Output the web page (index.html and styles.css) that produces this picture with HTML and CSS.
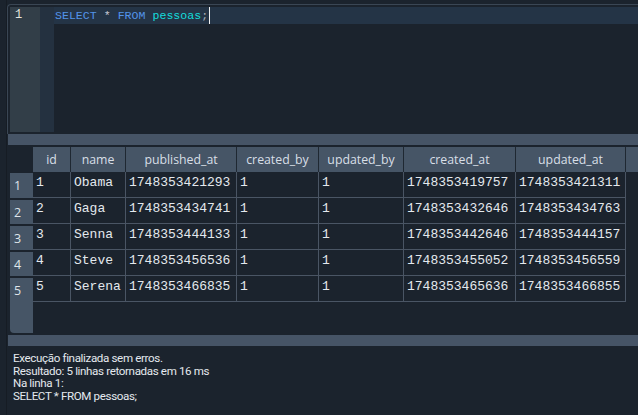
FILE: index.html
```html
<!DOCTYPE html>
<html lang="pt">
<head>
<meta charset="utf-8">
<link rel="stylesheet" href="styles.css">
</head>
<body>
<div class="app">
  <section class="editor">
    <div class="gutter"><div class="lineno">1</div></div>
    <div class="fold"></div>
    <div class="code">
      <div class="line current"><span class="kw">SELECT</span> <span class="op">*</span> <span class="kw">FROM</span> <span class="id">pessoas</span><span class="punct">;</span><span class="caret"></span></div>
    </div>
  </section>
  <div class="splitter"></div>
  <section class="grid-pane">
    <div class="hrow">
      <div class="corner"></div>
      <div class="hcell c-id">id</div>
      <div class="hcell c-name">name</div>
      <div class="hcell c-pub">published_at</div>
      <div class="hcell c-cby">created_by</div>
      <div class="hcell c-uby">updated_by</div>
      <div class="hcell c-cat">created_at</div>
      <div class="hcell c-uat">updated_at</div>
      <div class="hcell hfill"></div>
    </div>
    <div class="gbody">
      <div class="vheader">
        <div class="rnum">1</div>
        <div class="rnum">2</div>
        <div class="rnum">3</div>
        <div class="rnum">4</div>
        <div class="rnum last">5</div>
      </div>
      <div class="rows">
        <div class="row"><div class="cell c-id">1</div><div class="cell c-name">Obama</div><div class="cell c-pub">1748353421293</div><div class="cell c-cby">1</div><div class="cell c-uby">1</div><div class="cell c-cat">1748353419757</div><div class="cell c-uat">1748353421311</div></div>
        <div class="row"><div class="cell c-id">2</div><div class="cell c-name">Gaga</div><div class="cell c-pub">1748353434741</div><div class="cell c-cby">1</div><div class="cell c-uby">1</div><div class="cell c-cat">1748353432646</div><div class="cell c-uat">1748353434763</div></div>
        <div class="row"><div class="cell c-id">3</div><div class="cell c-name">Senna</div><div class="cell c-pub">1748353444133</div><div class="cell c-cby">1</div><div class="cell c-uby">1</div><div class="cell c-cat">1748353442646</div><div class="cell c-uat">1748353444157</div></div>
        <div class="row"><div class="cell c-id">4</div><div class="cell c-name">Steve</div><div class="cell c-pub">1748353456536</div><div class="cell c-cby">1</div><div class="cell c-uby">1</div><div class="cell c-cat">1748353455052</div><div class="cell c-uat">1748353456559</div></div>
        <div class="row"><div class="cell c-id">5</div><div class="cell c-name">Serena</div><div class="cell c-pub">1748353466835</div><div class="cell c-cby">1</div><div class="cell c-uby">1</div><div class="cell c-cat">1748353465636</div><div class="cell c-uat">1748353466855</div></div>
      </div>
    </div>
  </section>
  <div class="splitter lower"></div>
  <section class="messages">
    <div>Execução finalizada sem erros.</div>
    <div>Resultado: 5 linhas retornadas em 16 ms</div>
    <div>Na linha 1:</div>
    <div>SELECT * FROM pessoas;</div>
  </section>
</div>
</body>
</html>
```

FILE: styles.css
```css
* { box-sizing: border-box; }
html, body {
  margin: 0;
  padding: 0;
  background: #1b232d;
  width: 638px;
  height: 415px;
  overflow: hidden;
}
.app {
  display: flex;
  flex-direction: column;
  height: 415px;
  border-left: 1px solid #161c24;
  margin-left: 6px;
}

/* Editor */
.editor {
  display: flex;
  height: 130px;
  margin-top: 4px;
  border-top: 1px solid #3a4654;
  border-left: 1px solid #3a4654;
  border-top-left-radius: 4px;
  padding: 2px 0 2px 2px;
}
.gutter {
  width: 30px;
  background: #323e48;
}
.lineno {
  height: 17px;
  line-height: 17px;
  padding-left: 5px;
  font-family: "Liberation Mono", monospace;
  font-size: 12px;
  color: #e6e6de;
}
.fold {
  width: 14px;
  background: #243140;
}
.code {
  flex: 1;
  background: #1b232d;
}
.line {
  height: 17px;
  line-height: 17px;
  padding-left: 1px;
  font-family: "Liberation Mono", monospace;
  font-size: 11.6px;
  color: #c9d0d6;
  white-space: pre;
}
.line.current { background: #243446; }
.kw { color: #5393e8; }
.op { color: #c8c8d4; }
.id { color: #14dcdc; }
.punct { color: #a8b0b8; }
.caret {
  display: inline-block;
  width: 1px;
  height: 17px;
  background: #f0f0f0;
  margin-left: 1px;
  vertical-align: top;
}

/* Splitters */
.splitter {
  height: 11px;
  background: #465466;
  margin-left: 1px;
}

/* Grid */
.grid-pane {
  height: 190px;
  padding: 2px 0 2px 3px;
  display: flex;
  flex-direction: column;
}
.hrow {
  display: flex;
  height: 25px;
}
.corner {
  width: 23px;
  background: #1b232d;
}
.hcell {
  background: #465566;
  border-right: 1px solid #1f2832;
  color: #d8dfe6;
  font-family: "Open Sans", "Noto Sans", sans-serif;
  font-size: 12.3px;
  line-height: 25px;
  text-align: center;
  white-space: nowrap;
  overflow: hidden;
}
.hfill { flex: 1; border-right: none; }
.c-id { width: 38px; }
.c-name { width: 55px; }
.c-pub { width: 111px; }
.c-cby { width: 82px; }
.c-uby { width: 85px; }
.c-cat { width: 112px; }
.c-uat { width: 110px; }

.gbody {
  display: flex;
  flex: 1;
}
.vheader {
  width: 23px;
  display: flex;
  flex-direction: column;
  background: #465566;
  border-bottom-left-radius: 4px;
  height: 161px;
}
.rnum {
  height: 26px;
  border-top: 2px solid #1b232d;
  padding-left: 4px;
  padding-top: 2px;
  line-height: 21px;
  font-family: "Open Sans", "Noto Sans", sans-serif;
  font-size: 12.5px;
  color: #dfe5ea;
}
.rnum:first-child { border-top-width: 1px; }
.rows {
  display: flex;
  flex-direction: column;
}
.row {
  display: flex;
  height: 26px;
}
.cell {
  border-right: 1px solid #4a5564;
  border-bottom: 1px solid #4a5564;
  padding-left: 3px;
  line-height: 22px;
  font-family: "Liberation Mono", monospace;
  font-size: 13px;
  color: #e4e9ee;
  white-space: nowrap;
  overflow: hidden;
}

/* Messages */
.messages {
  flex: 1;
  padding: 6px 0 0 6px;
  font-family: Roboto, "Liberation Sans", sans-serif;
  font-size: 11.6px;
  letter-spacing: -0.36px;
  line-height: 12.7px;
  color: #e4e9ee;
}
```
